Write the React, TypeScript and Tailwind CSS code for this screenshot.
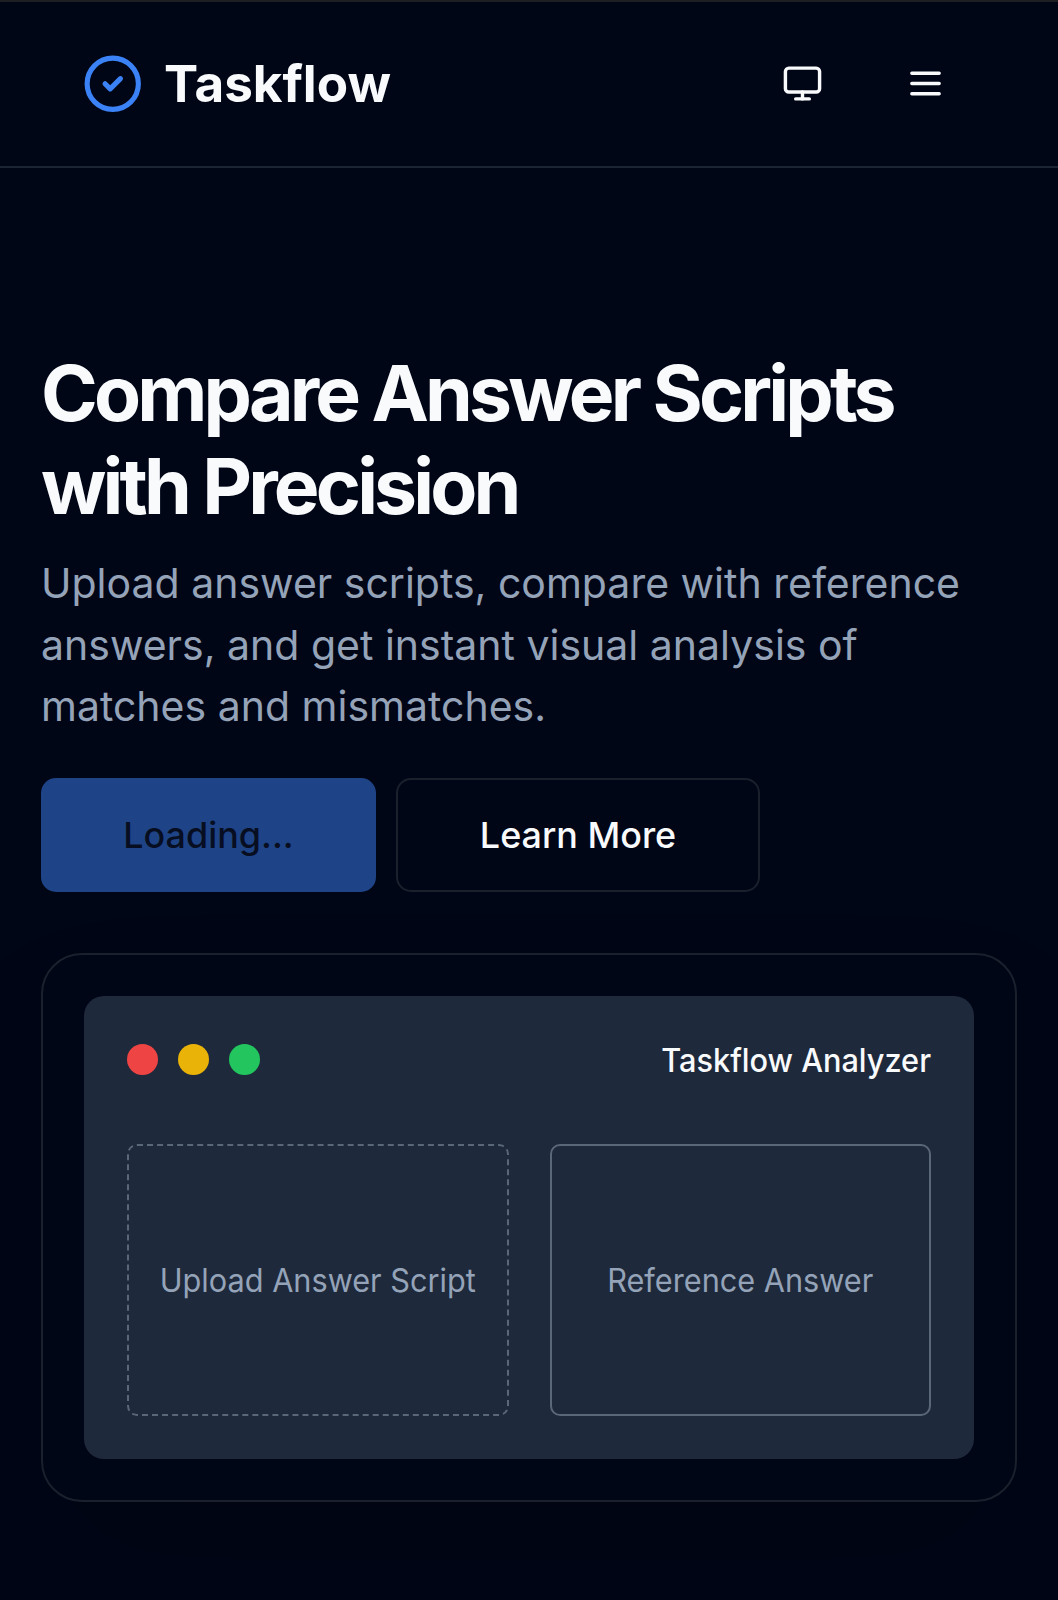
import { CircleCheck, Monitor } from 'lucide-react';

function MenuIcon() {
  return (
    <svg
      viewBox="0 0 24 24"
      className="size-[41px]"
      fill="none"
      stroke="currentColor"
      strokeWidth={2}
      strokeLinecap="round"
    >
      <path d="M4 6h16M4 12h16M4 18h16" />
    </svg>
  );
}

function Header() {
  return (
    <header className="flex h-[168px] items-center justify-between border-t-2 border-b-2 border-t-[#1d1f22] border-b-[#1b2433] pr-[112px] pl-[82px]">
      <a className="flex items-center gap-[20.5px]">
        <CircleCheck className="size-[61.5px] text-[#3b82f6]" strokeWidth={2} />
        <span className="-mt-[3px] text-[51.2px] leading-[72px] font-bold whitespace-nowrap">Taskflow</span>
      </a>
      <div className="-mt-px flex items-center gap-[82px]">
        <button aria-label="Theme">
          <Monitor className="size-[41px]" strokeWidth={2} />
        </button>
        <button aria-label="Menu">
          <MenuIcon />
        </button>
      </div>
    </header>
  );
}

function AnalyzerCard() {
  return (
    <div className="mt-[61px] h-[549px] rounded-[41px] border-2 border-[#1b202d] p-[41px] shadow-[0_64px_128px_-31px_rgba(0,0,0,0.25)]">
      <div className="flex h-full flex-col rounded-[20px] bg-[#1e293b] p-[43px]">
        <div className="flex h-[41px] items-center justify-between">
          <div className="flex gap-[20.2px]">
            <span className="size-[31px] rounded-full bg-[#ef4444]" />
            <span className="size-[31px] rounded-full bg-[#eab308]" />
            <span className="size-[31px] rounded-full bg-[#22c55e]" />
          </div>
          <span className="mt-px scale-y-[1.04] text-[30.7px] leading-[41px] font-medium whitespace-nowrap">
            Taskflow Analyzer
          </span>
        </div>
        <div className="mt-[64px] grid h-[272px] grid-cols-2 gap-[41px] text-[30.7px] text-[#94a3b8]">
          <div className="flex items-center justify-center rounded-[10px] border-2 border-dashed border-[#5a6779]">
            <span className="mt-px scale-y-[1.04] whitespace-nowrap">Upload Answer Script</span>
          </div>
          <div className="flex items-center justify-center rounded-[10px] border-2 border-[#5a6779]">
            <span className="mt-px scale-y-[1.04] whitespace-nowrap">Reference Answer</span>
          </div>
        </div>
      </div>
    </div>
  );
}

export default function App() {
  return (
    <div className="h-[1600px] overflow-hidden bg-[#010617] font-['Inter',sans-serif] text-[#f8fafc]">
      <Header />
      <main className="px-[41px] pt-[180px]">
        <h1 className="text-[76.85px] leading-[92.6px] font-bold tracking-tighter">
          Compare Answer Scripts
          <br />
          with Precision
        </h1>
        <p className="mt-[19.8px] text-[41px] leading-[61.7px] text-[#94a3b8]">
          Upload answer scripts, compare with reference
          <br />
          answers, and get instant visual analysis of
          <br />
          matches and mismatches.
        </p>
        <div className="mt-[40px] flex gap-[20px] text-[35.9px] font-medium">
          <button className="h-[114px] w-[335px] rounded-[15px] bg-[#3b82f6] pt-[2px] text-slate-900 opacity-50">Loading...</button>
          <button className="h-[114px] w-[364px] rounded-[15px] border-2 border-[#1b202d] pt-[2px]">Learn More</button>
        </div>
        <AnalyzerCard />
      </main>
    </div>
  );
}
